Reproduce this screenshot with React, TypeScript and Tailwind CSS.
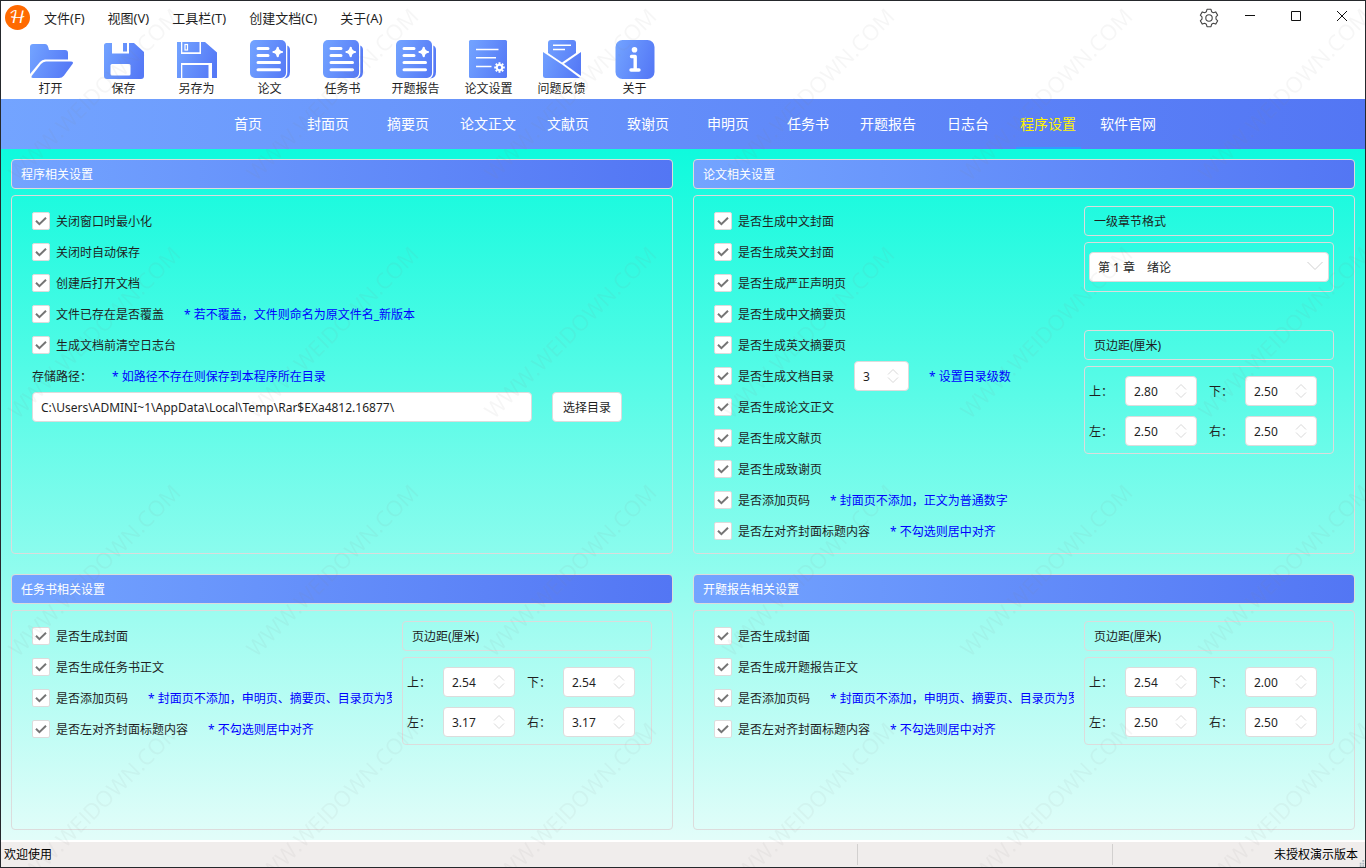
import { useId } from "react";
import type { ReactNode } from "react";

const menus = ["文件(F)", "视图(V)", "工具栏(T)", "创建文档(C)", "关于(A)"];

const tabs = [
  "首页",
  "封面页",
  "摘要页",
  "论文正文",
  "文献页",
  "致谢页",
  "申明页",
  "任务书",
  "开题报告",
  "日志台",
  "程序设置",
  "软件官网",
];

const activeTab = "程序设置";

function ToolSvg({ children }: { children: (fill: string) => ReactNode }) {
  const id = useId();
  return (
    <svg viewBox="0 0 48 44" className="h-11 w-12" fill="none" aria-hidden="true">
      <defs>
        <linearGradient id={id} gradientUnits="userSpaceOnUse" x1="4" y1="14" x2="44" y2="28">
          <stop offset="0" stopColor="#71a1ff" />
          <stop offset="1" stopColor="#5579f6" />
        </linearGradient>
      </defs>
      {children(`url(#${id})`)}
    </svg>
  );
}

function OpenIcon() {
  return (
    <ToolSvg>
      {(f) => (
        <>
          <path d="M6 7h12q2.4 0 3.2 3l.8 3h16q3 0 3 3v6.500H18q-3 0-5 2.500L3 37V10q0-3 3-3z" fill={f} />
          <path d="M19 24.500h25q3 0 1.500 2.500L37 38.500Q35 41 32 41H6q-2.500 0-1-2.500L14 27q2-2.500 5-2.500z" fill={f} />
        </>
      )}
    </ToolSvg>
  );
}

function SaveIcon() {
  return (
    <ToolSvg>
      {(f) => (
        <>
          <path d="M6.500 6H34l10 9v24q0 3-3 3H7q-3 0-3-3V8.500Q4 6 6.500 6z" fill={f} />
          <rect x="12" y="6" width="17" height="10.500" fill="#fff" />
          <rect x="23" y="6" width="4" height="8.500" fill={f} />
          <rect x="10.500" y="27" width="20" height="11.500" rx="1.500" fill="#fff" />
        </>
      )}
    </ToolSvg>
  );
}

function SaveAsIcon() {
  return (
    <ToolSvg>
      {(f) => (
        <>
          <path d="M4 5h28l12 10.500V41H4z" fill={f} />
          <path d="M8 5v12h20V5h-1.500v10.200H9.300V5z" fill="#fff" />
          <rect x="12" y="7.500" width="2.500" height="5.500" stroke="#fff" strokeWidth="1.200" />
          <path d="M8 41V26h31v15h-3.500V28H9.300v13z" fill="#fff" />
        </>
      )}
    </ToolSvg>
  );
}

function PaperIcon() {
  return (
    <ToolSvg>
      {(f) => (
        <>
          <rect x="4" y="3" width="36" height="38" rx="5" fill={f} />
          <path d="M41.300 8.500Q44 9.500 44 13v22q0 6-6 6.500 3.300-2 3.300-6z" fill={f} />
          <path d="M12 11.500h10M12 18.500h10M12 25.500h21.500M12 32.800h21.500" stroke="#fff" strokeWidth="3" strokeLinecap="round" />
          <path d="M31.700 11v8M27.700 15h8" stroke="#fff" strokeWidth="2.200" strokeLinecap="round" />
          <path d="M31.700 10.500q.8 3.700 4.500 4.500-3.700.8-4.500 4.500-.8-3.700-4.500-4.500 3.700-.8 4.500-4.500z" fill="#fff" stroke="#fff" strokeWidth="1.400" strokeLinejoin="round" />
        </>
      )}
    </ToolSvg>
  );
}

function PaperSettingsIcon() {
  return (
    <ToolSvg>
      {(f) => (
        <>
          <rect x="4" y="3" width="38" height="38" rx="1.500" fill={f} />
          <path d="M11 12.500h22.500M11 20.800h20M11 29.500h15.500" stroke="#fff" strokeWidth="1.600" />
          <circle cx="34.500" cy="30.500" r="2.700" stroke="#fff" strokeWidth="2" />
          <path d="M34.500 25.200v1.800M34.500 34v1.800M29.200 30.500H31M38 30.500h1.800M30.800 26.800l1.200 1.200M37 33l1.200 1.200M38.200 26.800L37 28M32 33l-1.200 1.200" stroke="#fff" strokeWidth="2" />
        </>
      )}
    </ToolSvg>
  );
}

function FeedbackIcon() {
  return (
    <ToolSvg>
      {(f) => (
        <>
          <path d="M13 3h22q3 0 3 3v10L24 25.500 10 16V6q0-3 3-3z" fill={f} />
          <path d="M15 8.200h18M15 12.500h12" stroke="#fff" strokeWidth="1.400" />
          <path d="M5 15l19 12.500L42 41H7.500Q5 41 5 38.500z" fill={f} />
          <path d="M43 15v24L26 26.800z" fill={f} />
        </>
      )}
    </ToolSvg>
  );
}

function AboutIcon() {
  return (
    <ToolSvg>
      {(f) => (
        <>
          <rect x="4.500" y="3" width="39" height="39" rx="7" fill={f} />
          <circle cx="23.500" cy="12.700" r="2.800" fill="#fff" />
          <path d="M20.500 19.500h3.700V33M20 33h8" stroke="#fff" strokeWidth="3.400" strokeLinecap="round" strokeLinejoin="round" />
        </>
      )}
    </ToolSvg>
  );
}

const tools: { label: string; icon: ReactNode }[] = [
  { label: "打开", icon: <OpenIcon /> },
  { label: "保存", icon: <SaveIcon /> },
  { label: "另存为", icon: <SaveAsIcon /> },
  { label: "论文", icon: <PaperIcon /> },
  { label: "任务书", icon: <PaperIcon /> },
  { label: "开题报告", icon: <PaperIcon /> },
  { label: "论文设置", icon: <PaperSettingsIcon /> },
  { label: "问题反馈", icon: <FeedbackIcon /> },
  { label: "关于", icon: <AboutIcon /> },
];

function TitleBar() {
  return (
    <header className="flex h-[35px] items-start justify-between">
      <div className="flex items-start gap-[14px] pt-1 pl-1">
        <svg viewBox="0 0 25 25" className="size-[25px]" aria-hidden="true">
          <circle cx="12.500" cy="12.500" r="12.500" fill="#ff6a00" />
          <text x="12.500" y="18" textAnchor="middle" fontSize="17" fill="#fff" fontFamily="DejaVu Math TeX Gyre, DejaVu Serif, serif">
            ℋ
          </text>
        </svg>
        <nav className="flex gap-[23px] text-[13px] leading-[26px]">
          {menus.map((m) => (
            <button key={m} type="button">
              {m}
            </button>
          ))}
        </nav>
      </div>
      <div className="flex items-start">
        <button type="button" aria-label="设置" className="grid h-[34px] w-9 place-items-center">
          <svg viewBox="0 0 20 20" className="size-5" fill="none" stroke="#444" strokeWidth="1.100" strokeLinejoin="round">
            <path d="M8 1.300h4l.6 2.400 1.700 1 2.400-.8 2 3.300-1.700 1.700v2.200l1.700 1.700-2 3.300-2.400-.8-1.700 1-.6 2.400H8l-.6-2.400-1.700-1-2.400.8-2-3.300L3 11.100V8.900L1.300 7.200l2-3.300 2.400.8 1.700-1z" />
            <circle cx="10" cy="10" r="3.200" />
          </svg>
        </button>
        <button type="button" aria-label="最小化" className="grid h-[30px] w-[46px] place-items-center">
          <svg viewBox="0 0 10 10" className="size-[10px]" stroke="#111">
            <path d="M0 4.500h10" />
          </svg>
        </button>
        <button type="button" aria-label="最大化" className="grid h-[30px] w-[46px] place-items-center">
          <svg viewBox="0 0 10 10" className="size-[10px]" fill="none" stroke="#111">
            <path d="M.5.5h9v9h-9z" />
          </svg>
        </button>
        <button type="button" aria-label="关闭" className="grid h-[30px] w-[46px] place-items-center">
          <svg viewBox="0 0 10 10" className="size-[10px]" stroke="#111">
            <path d="M0 0l10 10M10 0L0 10" />
          </svg>
        </button>
      </div>
    </header>
  );
}

function Toolbar() {
  return (
    <div className="flex h-[63px] pl-[13px]">
      {tools.map((t) => (
        <button key={t.label} type="button" className="flex w-[73px] flex-col items-center pt-px text-xs leading-4">
          {t.icon}
          <span>{t.label}</span>
        </button>
      ))}
    </div>
  );
}

function TabBar() {
  return (
    <nav className="flex h-[50px] justify-center bg-linear-to-r/srgb from-[#73a4ff] to-[#5376f4] pl-[10px] text-sm text-white">
      {tabs.map((t) => (
        <a key={t} href="#" className="flex w-20 justify-center">
          {t === activeTab ? (
            <span className="flex w-[65px] items-center justify-center border-b-2 border-[#2f9dff] pt-0.5 whitespace-nowrap text-[#fff200]">{t}</span>
          ) : (
            <span className="flex items-center whitespace-nowrap">{t}</span>
          )}
        </a>
      ))}
    </nav>
  );
}

function Hint({ children }: { children: ReactNode }) {
  return <span className="pt-0.5 whitespace-nowrap text-[#0000ff]">{children}</span>;
}

function Check({ label, children }: { label: string; children?: ReactNode }) {
  return (
    <div className="flex h-[31px] items-center gap-5 pb-px">
      <label className="flex shrink-0 items-center gap-1.5">
        <span className="grid size-[18px] place-items-center">
          <input
            type="checkbox"
            defaultChecked
            className="peer col-start-1 row-start-1 size-[18px] appearance-none rounded-[2px] border border-[#dcdcdc] bg-white"
          />
          <svg
            viewBox="0 0 12 12"
            className="pointer-events-none col-start-1 row-start-1 hidden size-3 peer-checked:block"
            fill="none"
            stroke="#757575"
            strokeWidth="2"
          >
            <path d="M1 5.800l3.400 3.400L11 2.800" />
          </svg>
        </span>
        <span className="pt-0.5">{label}</span>
      </label>
      {children}
    </div>
  );
}

function Spinner({ label, value, wide }: { label: string; value: string; wide?: boolean }) {
  return (
    <div
      className={
        wide
          ? "flex h-[30px] w-[72px] shrink-0 items-center rounded border border-[#dcdcdc] bg-white pr-[9px] pl-2"
          : "flex h-[30px] w-[55px] shrink-0 items-center rounded border border-[#dcdcdc] bg-white pr-[9px] pl-2"
      }
    >
      <input aria-label={label} defaultValue={value} className="w-full min-w-0 bg-transparent pt-0.5 outline-none" />
      <div className="flex flex-col gap-0.5">
        <button type="button" aria-label={`${label}增加`}>
          <svg viewBox="0 0 12 6" className="block h-[6px] w-3" fill="none" stroke="#d8d8d8">
            <path d="M1 5.500l5-5 5 5" />
          </svg>
        </button>
        <button type="button" aria-label={`${label}减少`}>
          <svg viewBox="0 0 12 6" className="block h-[6px] w-3" fill="none" stroke="#d8d8d8">
            <path d="M1 .5l5 5 5-5" />
          </svg>
        </button>
      </div>
    </div>
  );
}

function BoxTitle({ children }: { children: ReactNode }) {
  return <h3 className="flex h-[30px] items-center rounded border border-[#dcdcdc] pt-0.5 pl-[9px]">{children}</h3>;
}

function Margins({ values }: { values: [string, string, string, string] }) {
  const names = ["上", "下", "左", "右"];
  return (
    <section className="flex flex-col gap-1.5">
      <BoxTitle>页边距(厘米)</BoxTitle>
      <div className="grid grid-cols-[108px_108px] gap-x-3 gap-y-[10px] rounded border border-[#dcdcdc] pt-[9px] pb-[7px] pl-1">
        {names.map((n, i) => (
          <div key={n} className="flex items-center">
            <span className="w-9 pt-0.5">{n}：</span>
            <Spinner label={`${n}边距`} value={values[i]} wide />
          </div>
        ))}
      </div>
    </section>
  );
}

function Panel({ title, children }: { title: string; children: ReactNode }) {
  return (
    <section className="flex min-w-0 flex-col gap-1.5">
      <h2 className="flex h-[30px] items-center rounded border border-[#dcdcdc] bg-linear-to-r/srgb from-[#73a4ff] to-[#5376f4] pt-0.5 pl-[9px] text-white">
        {title}
      </h2>
      <div className="flex min-h-[220px] flex-1 gap-[10px] rounded border border-[#dcdcdc] px-5 pt-[10px] pb-1.5">{children}</div>
    </section>
  );
}

function DocumentPanel({ title, body, values }: { title: string; body: string; values: [string, string, string, string] }) {
  return (
    <Panel title={title}>
      <div className="min-w-0 flex-1 overflow-hidden">
        <Check label="是否生成封面" />
        <Check label={body} />
        <Check label="是否添加页码">
          <Hint>* 封面页不添加，申明页、摘要页、目录页为罗</Hint>
        </Check>
        <Check label="是否左对齐封面标题内容">
          <Hint>* 不勾选则居中对齐</Hint>
        </Check>
      </div>
      <div className="w-[250px] shrink-0">
        <Margins values={values} />
      </div>
    </Panel>
  );
}

function Watermark() {
  return (
    <svg className="pointer-events-none absolute inset-0 h-full w-full" aria-hidden="true">
      <defs>
        <pattern id="mark" width="238" height="238" patternUnits="userSpaceOnUse" x="0" y="-53">
          <text transform="translate(17 234) rotate(-45)" fontSize="22" fill="#808080" fillOpacity="0.070" fontFamily="Open Sans, sans-serif">
            WWW.WEIDOWN.COM
          </text>
        </pattern>
      </defs>
      <rect width="100%" height="100%" fill="url(#mark)" />
    </svg>
  );
}

export default function App() {
  return (
    <div className="relative flex min-h-screen flex-col border border-[#25282c] bg-white font-['Noto_Sans','Noto_Sans_CJK_SC',sans-serif] text-xs text-[#1f1f1f]">
      <TitleBar />
      <Toolbar />
      <TabBar />
      <main className="grid flex-1 grid-cols-2 grid-rows-[1fr_auto] gap-5 border-b-2 border-white bg-linear-to-b/srgb from-[#0ffadd] to-[#e2fdf9] p-[10px]">
        <Panel title="程序相关设置">
          <div className="min-w-0 flex-1">
            <Check label="关闭窗口时最小化" />
            <Check label="关闭时自动保存" />
            <Check label="创建后打开文档" />
            <Check label="文件已存在是否覆盖">
              <Hint>* 若不覆盖，文件则命名为原文件名_新版本</Hint>
            </Check>
            <Check label="生成文档前清空日志台" />
            <div className="flex h-[31px] items-center gap-5 pb-px">
              <label htmlFor="path" className="pt-0.5">
                存储路径：
              </label>
              <Hint>* 如路径不存在则保存到本程序所在目录</Hint>
            </div>
            <div className="flex gap-5">
              <input
                id="path"
                defaultValue="C:\Users\ADMINI~1\AppData\Local\Temp\Rar$EXa4812.16877\"
                className="h-[30px] w-[500px] min-w-0 rounded border border-[#dcdcdc] bg-white px-2 outline-none"
              />
              <button type="button" className="h-[30px] w-[70px] shrink-0 rounded border border-[#dcdcdc] bg-white pt-0.5">
                选择目录
              </button>
            </div>
          </div>
        </Panel>

        <Panel title="论文相关设置">
          <div className="min-w-0 flex-1">
            <Check label="是否生成中文封面" />
            <Check label="是否生成英文封面" />
            <Check label="是否生成严正声明页" />
            <Check label="是否生成中文摘要页" />
            <Check label="是否生成英文摘要页" />
            <Check label="是否生成文档目录">
              <Spinner label="目录级数" value="3" />
              <Hint>* 设置目录级数</Hint>
            </Check>
            <Check label="是否生成论文正文" />
            <Check label="是否生成文献页" />
            <Check label="是否生成致谢页" />
            <Check label="是否添加页码">
              <Hint>* 封面页不添加，正文为普通数字</Hint>
            </Check>
            <Check label="是否左对齐封面标题内容">
              <Hint>* 不勾选则居中对齐</Hint>
            </Check>
          </div>
          <div className="flex w-[250px] shrink-0 flex-col gap-[38px]">
            <section className="flex flex-col gap-1.5">
              <BoxTitle>一级章节格式</BoxTitle>
              <div className="relative rounded border border-[#dcdcdc] px-1 py-[9px]">
                <select aria-label="一级章节格式" className="h-[30px] w-full appearance-none rounded border border-[#dcdcdc] bg-white px-2 pt-0.5 outline-none">
                  <option>第 1 章　绪论</option>
                </select>
                <svg viewBox="0 0 16 10" className="pointer-events-none absolute top-[18px] right-[10px] h-[10px] w-4" fill="none" stroke="#d0d0d0">
                  <path d="M.5 1L8 8.500 15.500 1" />
                </svg>
              </div>
            </section>
            <Margins values={["2.80", "2.50", "2.50", "2.50"]} />
          </div>
        </Panel>

        <DocumentPanel title="任务书相关设置" body="是否生成任务书正文" values={["2.54", "2.54", "3.17", "3.17"]} />
        <DocumentPanel title="开题报告相关设置" body="是否生成开题报告正文" values={["2.54", "2.00", "2.50", "2.50"]} />
      </main>
      <footer className="flex h-[25px] items-stretch bg-[#f0edec] py-0.5 text-black">
        <span className="flex flex-1 items-center pl-[3px]">欢迎使用</span>
        <span className="w-[255px] border-l border-[#d2d0cf]" />
        <span className="flex w-[246px] items-center justify-end border-l border-[#d2d0cf]">未授权演示版本</span>
        <svg viewBox="0 0 8 8" className="-mb-0.5 size-[7px] self-end" fill="#a9b4bd" aria-hidden="true">
          <path d="M5 0h2v2H5zM2 3h2v2H2zM5 3h2v2H5zM2 6h2v2H2zM5 6h2v2H5z" />
        </svg>
      </footer>
      <Watermark />
    </div>
  );
}
